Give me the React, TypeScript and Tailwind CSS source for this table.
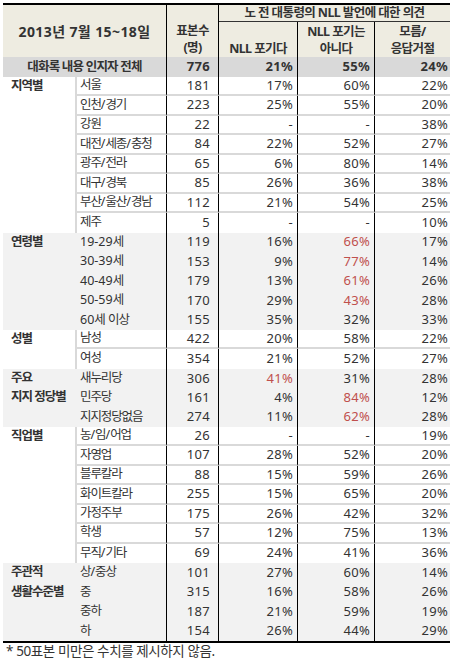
import React from "react";

type R = [string, string, string, string, string];
type Section = { cat: string[]; gray: boolean; rows: R[] };

const sections: Section[] = [
  {
    cat: ["지역별"],
    gray: false,
    rows: [
      ["서울", "181", "17%", "60%", "22%"],
      ["인천/경기", "223", "25%", "55%", "20%"],
      ["강원", "22", "-", "-", "38%"],
      ["대전/세종/충청", "84", "22%", "52%", "27%"],
      ["광주/전라", "65", "6%", "80%", "14%"],
      ["대구/경북", "85", "26%", "36%", "38%"],
      ["부산/울산/경남", "112", "21%", "54%", "25%"],
      ["제주", "5", "-", "-", "10%"],
    ],
  },
  {
    cat: ["연령별"],
    gray: true,
    rows: [
      ["19-29세", "119", "16%", "66%*", "17%"],
      ["30-39세", "153", "9%", "77%*", "14%"],
      ["40-49세", "179", "13%", "61%*", "26%"],
      ["50-59세", "170", "29%", "43%*", "28%"],
      ["60세 이상", "155", "35%", "32%", "33%"],
    ],
  },
  {
    cat: ["성별"],
    gray: false,
    rows: [
      ["남성", "422", "20%", "58%", "22%"],
      ["여성", "354", "21%", "52%", "27%"],
    ],
  },
  {
    cat: ["주요", "지지 정당별"],
    gray: true,
    rows: [
      ["새누리당", "306", "41%*", "31%", "28%"],
      ["민주당", "161", "4%", "84%*", "12%"],
      ["지지정당없음", "274", "11%", "62%*", "28%"],
    ],
  },
  {
    cat: ["직업별"],
    gray: false,
    rows: [
      ["농/임/어업", "26", "-", "-", "19%"],
      ["자영업", "107", "28%", "52%", "20%"],
      ["블루칼라", "88", "15%", "59%", "26%"],
      ["화이트칼라", "255", "15%", "65%", "20%"],
      ["가정주부", "175", "26%", "42%", "32%"],
      ["학생", "57", "12%", "75%", "13%"],
      ["무직/기타", "69", "24%", "41%", "36%"],
    ],
  },
  {
    cat: ["주관적", "생활수준별"],
    gray: true,
    rows: [
      ["상/중상", "101", "27%", "60%", "14%"],
      ["중", "315", "16%", "58%", "26%"],
      ["중하", "187", "21%", "59%", "19%"],
      ["하", "154", "26%", "44%", "29%"],
    ],
  },
];

function K({ t }: { t: string }) {
  const parts = t.split(/([가-힣]+)/).filter((p) => p.length > 0);
  return (
    <span className="whitespace-pre">
      {parts.map((p, i) =>
        /[가-힣]/.test(p) ? (
          <span key={i} className="tracking-[-1.1px]">
            {p}
          </span>
        ) : (
          <span key={i}>{p}</span>
        )
      )}
    </span>
  );
}

function Val({ v }: { v: string }) {
  const red = v.endsWith("*");
  const t = red ? v.slice(0, -1) : v;
  return <span className={red ? "text-[#c0504d]" : ""}>{t}</span>;
}

function Row({ r, sep }: { r: R; sep: boolean }) {
  const b = sep ? "border-b-2 border-b-[#d9d9d9]" : "";
  return (
    <div className="flex h-[19.45px]">
      <div className={`w-[89px] shrink-0 pl-[3px] flex items-center whitespace-nowrap text-[12.5px] ${b}`}>
        <K t={r[0]} />
      </div>
      <div className={`w-[52px] shrink-0 border-l border-l-black pr-[8px] flex items-center justify-end text-[13px] tracking-[0.3px] ${b}`}>{r[1]}</div>
      <div className={`w-[79px] shrink-0 border-l border-l-black pr-[4px] flex items-center justify-end text-[13px] tracking-[0.3px] ${b}`}><Val v={r[2]} /></div>
      <div className={`w-[77px] shrink-0 border-l border-l-black pr-[4px] flex items-center justify-end text-[13px] tracking-[0.3px] ${b}`}><Val v={r[3]} /></div>
      <div className={`w-[76px] shrink-0 border-l border-l-black pr-[2px] flex items-center justify-end text-[13px] tracking-[0.3px] ${b}`}><Val v={r[4]} /></div>
    </div>
  );
}

export default function App() {
  return (
    <div className="w-[458px] h-[659px] bg-white text-[#333] font-['Noto_Sans','Noto_Sans_CJK_KR',sans-serif] overflow-hidden">
      <div className="ml-[3px] pt-[3px] w-[447px]">
        {/* header */}
        <div className="flex h-[54px] border-t-2 border-t-black bg-[#eeece1] font-bold">
          <div className="w-[163px] shrink-0 flex items-center justify-center text-[14px] tracking-[0.4px]">
            2013년 7월 15~18일
          </div>
          <div className="w-[52px] shrink-0 border-l border-l-black flex flex-col items-center justify-end pb-[1px] text-[12.5px] leading-[17px] tracking-[-0.6px]">
            <span>표본수</span>
            <span>(명)</span>
          </div>
          <div className="flex-1 border-l border-l-black flex flex-col">
            <div className="h-[17px] border-b border-b-[#333] flex items-center justify-center text-[12.5px] tracking-[-0.6px]">
              노 전 대통령의 NLL 발언에 대한 의견
            </div>
            <div className="flex flex-1 text-[12.5px] tracking-[-0.6px] leading-[17px]">
              <div className="w-[78px] shrink-0 flex flex-col items-center justify-end">
                <span>NLL 포기다</span>
              </div>
              <div className="w-[77px] shrink-0 border-l border-l-black flex flex-col items-center justify-end">
                <span>NLL 포기는</span>
                <span>아니다</span>
              </div>
              <div className="w-[76px] shrink-0 border-l border-l-black flex flex-col items-center justify-end">
                <span>모름/</span>
                <span>응답거절</span>
              </div>
            </div>
          </div>
        </div>
        {/* total row */}
        <div className="flex h-[20px] bg-[#d9d9d9] font-bold">
          <div className="w-[163px] shrink-0 flex items-center justify-center text-[12.5px] tracking-[-0.8px]">
            대화록 내용 인지자 전체
          </div>
          <div className="w-[52px] shrink-0 border-l border-l-black pr-[8px] flex items-center justify-end text-[13px] tracking-[0.3px]">776</div>
          <div className="w-[79px] shrink-0 border-l border-l-black pr-[4px] flex items-center justify-end text-[13px] tracking-[0.3px]">21%</div>
          <div className="w-[77px] shrink-0 border-l border-l-black pr-[4px] flex items-center justify-end text-[13px] tracking-[0.3px]">55%</div>
          <div className="w-[76px] shrink-0 border-l border-l-black pr-[2px] flex items-center justify-end text-[13px] tracking-[0.3px]">24%</div>
        </div>
        {/* body */}
        {sections.map((s, i) => (
          <div key={i} className={`flex ${s.gray ? "bg-[#f2f2f2]" : "bg-white"}`}>
            <div
              className={`w-[74px] shrink-0 pl-[8px] font-bold text-[12.5px] tracking-[-1px] ${
                s.gray ? "" : "border-r-2 border-r-[#d9d9d9]"
              }`}
            >
              {s.cat.map((c, j) => (
                <div key={j} className="h-[19.45px] flex items-center whitespace-nowrap">
                  {c}
                </div>
              ))}
            </div>
            <div className="flex flex-col">
              {s.rows.map((r, j) => (
                <Row key={j} r={r} sep={!s.gray && j < s.rows.length - 1} />
              ))}
            </div>
          </div>
        ))}
        <div className="h-[2px] bg-black" />
      </div>
      <div className="pl-[6px] text-[13.5px] tracking-[-0.4px] leading-[16px]">
        * 50표본 미만은 수치를 제시하지 않음.
      </div>
    </div>
  );
}
